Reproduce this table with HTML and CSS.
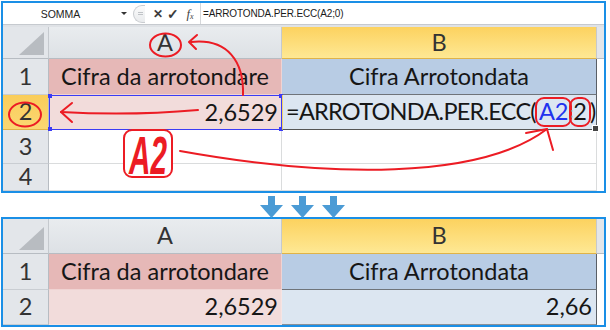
FILE: index.html
```html
<!DOCTYPE html>
<html lang="it">
<head>
<meta charset="utf-8">
<title>ARROTONDA.PER.ECC</title>
<link rel="stylesheet" href="styles.css">
</head>
<body>
<div class="page">
  <section class="panel top">
    <div class="fbar">
      <div class="namebox">SOMMA</div>
      <div class="dd"></div>
      <div class="grip"><span class="gripdot"></span></div>
      <div class="fbtn x">✕</div>
      <div class="fbtn ok">✓</div>
      <div class="fbtn fx">f<sub>x</sub></div>
      <div class="fsep"></div>
      <div class="ftext">=ARROTONDA.PER.ECC(A2;0)</div>
    </div>
    <div class="strip"></div>
    <div class="grid grid-top">
      <div class="corner"></div>
      <div class="colh">A</div>
      <div class="colh sel">B</div>
      <div class="fill head"></div>

      <div class="rowh">1</div>
      <div class="cell a1">Cifra da arrotondare</div>
      <div class="cell b1">Cifra Arrotondata</div>
      <div class="fill"></div>

      <div class="rowh sel">2</div>
      <div class="cell a2 active">2,6529</div>
      <div class="cell b2 formula">=ARROTONDA.PER.ECC(<span class="ref">A2</span><span class="semi">;</span><span class="arg">2</span>)</div>
      <div class="fill"></div>

      <div class="rowh">3</div>
      <div class="cell blank"></div>
      <div class="cell blank"></div>
      <div class="fill"></div>

      <div class="rowh">4</div>
      <div class="cell blank"></div>
      <div class="cell blank"></div>
      <div class="fill"></div>
    </div>
  </section>

  <div class="arrows">
    <svg class="down" viewBox="0 0 23 22"><path d="M8 0h7v9h8L11.5 22 0 9h8z"/></svg>
    <svg class="down" viewBox="0 0 23 22"><path d="M8 0h7v9h8L11.5 22 0 9h8z"/></svg>
    <svg class="down" viewBox="0 0 23 22"><path d="M8 0h7v9h8L11.5 22 0 9h8z"/></svg>
  </div>

  <section class="panel bottom">
    <div class="grid grid-bottom">
      <div class="corner"></div>
      <div class="colh">A</div>
      <div class="colh sel">B</div>
      <div class="fill head"></div>

      <div class="rowh">1</div>
      <div class="cell a1">Cifra da arrotondare</div>
      <div class="cell b1">Cifra Arrotondata</div>
      <div class="fill"></div>

      <div class="rowh">2</div>
      <div class="cell a2">2,6529</div>
      <div class="cell b2 num">2,66</div>
      <div class="fill"></div>
    </div>
  </section>

  <svg class="overlay" viewBox="0 0 610 330" width="610" height="330">
    <g fill="none" stroke="#ec1c24" stroke-width="2" stroke-linecap="round">
      <ellipse cx="165.5" cy="45" rx="15.5" ry="11.5"/>
      <path d="M243 95 C244 62 228 38 191 42"/>
      <path d="M189 42 L197 35 M189 42 L196 49"/>
      <ellipse cx="25" cy="114.5" rx="16" ry="12"/>
      <path d="M198 110 Q130 116 61 112"/>
      <path d="M61 112 L72 103 M61 112 L72 122"/>
      <path d="M180 151 C330 178 480 180 547 129"/>
      <path d="M547 129 L526 133 M547 129 L553 150"/>
    </g>
  </svg>
  <svg class="badge" viewBox="0 0 100 60" width="100" height="60">
    <rect x="5" y="6" width="48" height="47" rx="8" ry="8" fill="#fff" stroke="#ec1c24" stroke-width="2"/>
    <text class="badge-text" x="10" y="50" textLength="38" lengthAdjust="spacingAndGlyphs">A2</text>
  </svg>
</div>
</body>
</html>
```
FILE: styles.css
```css
* { box-sizing: border-box; }
html, body { margin: 0; padding: 0; background: #ffffff; }
body { font-family: Lato, "Open Sans", sans-serif; color: #222; }

.page {
  position: relative;
  width: 610px;
  height: 330px;
  padding: 1px 0 0 1px;
}

.panel {
  width: 605px;
  border: 2px solid #1a8fe6;
  background: #fff;
  overflow: hidden;
}
.top { height: 192px; }
.bottom { height: 110px; }

/* formula bar */
.fbar {
  height: 21px;
  display: flex;
  align-items: center;
  background: #fff;
  font-family: "Liberation Sans", Arial, sans-serif;
  font-size: 10.5px;
  color: #222;
}
.namebox { width: 115px; text-align: center; }
.dd {
  width: 0; height: 0;
  margin-left: 3px;
  border-left: 3px solid transparent;
  border-right: 3px solid transparent;
  border-top: 3px solid #333;
}
.grip {
  width: 12px; height: 18px;
  margin-left: 6px;
  border: 1px solid #c9ccd0;
  border-right: none;
  border-radius: 9px 0 0 9px;
  background: linear-gradient(#fbfbfb, #e9ebed);
  display: flex; align-items: center; justify-content: center;
}
.gripdot { width: 5px; height: 3px; border-top: 1px solid #c0c3c7; border-bottom: 1px solid #c0c3c7; margin-left: 2px; }
.fbtn { color: #3c3c3c; text-align: center; font-weight: bold; }
.x { width: 12px; margin-left: 7px; font-size: 12px; }
.ok { width: 14px; margin-left: 2px; font-size: 14px; }
.fx { width: 14px; margin-left: 3px; font-family: "Liberation Serif", serif; font-style: italic; font-weight: normal; font-size: 13px; color: #444; }
.fx sub { font-size: 8px; vertical-align: -1px; }
.fsep { width: 1px; height: 21px; background: #d5d7da; margin-left: 3px; }
.ftext { padding-left: 2px; font-size: 10px; color: #1a1a1a; letter-spacing: -0.15px; }

.strip {
  height: 3px;
  background: #dfe2e6;
  border-top: 1px solid #c6cacf;
}

/* grid */
.grid {
  display: grid;
  grid-template-columns: 46px 233px 315px 1fr;
  font-size: 23.5px;
}
.grid-top { grid-template-rows: 32px 36px 35px 34px 27px; }
.grid-bottom { grid-template-rows: 35px 36px 35px; }

.grid > div { display: flex; align-items: center; line-height: 1; white-space: nowrap; }

.corner {
  position: relative;
  background: #e3e6ea;
  border-right: 1px solid #c5c9ce;
  border-bottom: 1px solid #b7bcc2;
}
.corner::after {
  content: "";
  position: absolute;
  right: 4px; bottom: 3px;
  width: 25px; height: 23px;
  background: #b8bcc1;
  clip-path: polygon(100% 0, 100% 100%, 0 100%);
}
.colh {
  justify-content: center;
  color: #333;
  background: linear-gradient(#e9ecef, #dde1e5);
  border-right: 1px solid #c5c9ce;
  border-bottom: 1px solid #b7bcc2;
}
.colh.sel {
  background: linear-gradient(#fcd25f, #fee894);
  border-bottom: 1px solid #e0b348;
  border-right: 1px solid #c7c9cb;
}
.fill { background: #fff; }
.fill.head { background: #e3e6ea; border-bottom: 1px solid #b7bcc2; }

.rowh {
  justify-content: center;
  color: #333;
  background: #e3e6ea;
  border-right: 1px solid #b7bcc2;
  border-bottom: 1px solid #c9cdd2;
}
.rowh.sel { background: linear-gradient(#f9cd5a, #fbd772); border-bottom-color: #e0b348; }

.cell { padding: 0 5px; color: #161616; border-right: 1px solid #dadcdd; border-bottom: 1px solid #dadcdd; }
.a1 { justify-content: center; background: #e6b8b7; border-color: #f0d3d2; }
.b1 { justify-content: center; background: #b8cce4; border-right: 1px solid #5a5f66; border-bottom: 1px solid #6f747a; }
.a2 { justify-content: flex-end; padding-right: 3px; background: #f2dcdb; border-color: #f6e4e3; }
.b2 { background: #dce6f1; border-right: 1px solid #5a5f66; border-bottom: 1px solid #8a9098; }
.b2.num { justify-content: flex-end; padding-right: 4px; }
.blank { background: #fff; }

.a2.active { position: relative; border: 1px solid #3b3bf5; }
.a2.active::before {
  content: "";
  position: absolute;
  left: -2px; top: -2px;
  width: 4px; height: 4px;
  background: #3b3bf5;
  box-shadow: 231px 0 #3b3bf5, 0 33px #3b3bf5, 231px 33px #3b3bf5;
}
.formula {
  position: relative;
  padding-left: 3px;
  overflow: visible;
  letter-spacing: -0.75px;
  border-left: 1px solid #f3d36a;
  border-bottom-color: #555;
}
.formula::after {
  content: "";
  position: absolute;
  right: -3px; bottom: -3px;
  width: 5px; height: 5px;
  background: #444;
  border: 1px solid #fff;
}
.ref, .arg {
  display: inline-block;
  border: 2px solid #ec1c24;
  border-radius: 9px;
  padding: 1px 2px;
  letter-spacing: 0;
}
.ref { color: #2233ee; margin: 0 -3px 0 -1px; }
.arg { margin: 0 -1px 0 -3px; }
.semi { display: inline-block; font-size: 14px; color: #8a8f95; }

/* arrows between panels */
.arrows {
  height: 24px;
  display: flex;
  gap: 8px;
  padding: 3px 0 0 259px;
}
.down { width: 23px; height: 22px; fill: #4b9bd5; }

/* annotations */
.overlay { position: absolute; left: 0; top: 0; pointer-events: none; }
.badge { position: absolute; left: 119px; top: 124px; pointer-events: none; }
.badge-text {
  font-family: "Liberation Sans", Arial, sans-serif;
  font-weight: bold;
  font-style: italic;
  font-size: 53px;
  fill: #ec1c24;
}
```
